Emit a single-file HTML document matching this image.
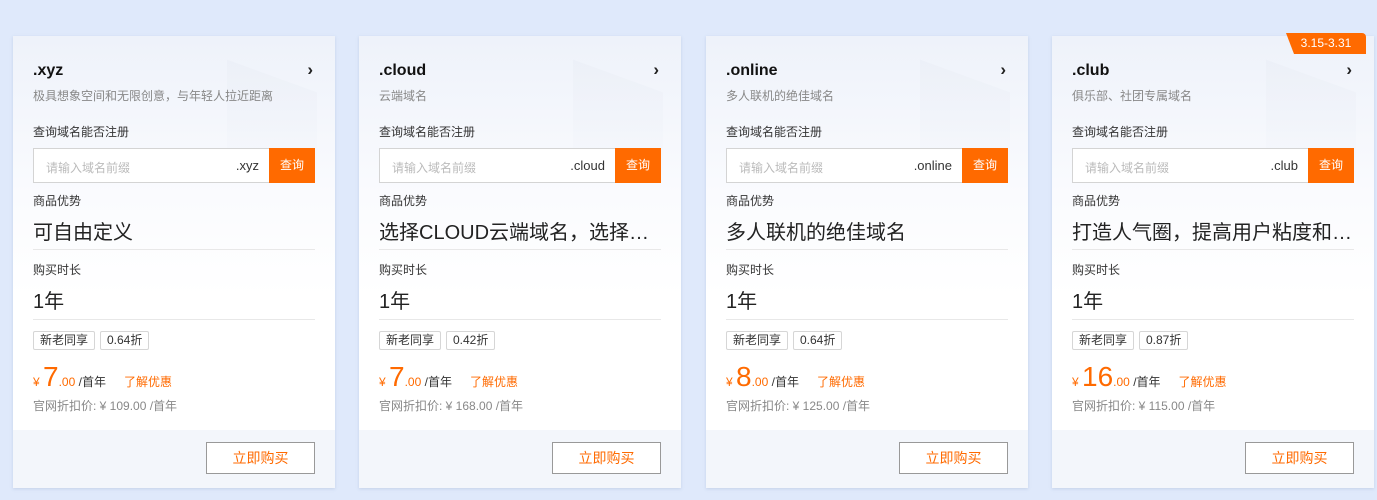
<!DOCTYPE html>
<html><head><meta charset="utf-8"><style>
*{margin:0;padding:0;box-sizing:border-box}
body{width:1377px;height:500px;background:#dfe9fb;font-family:"Liberation Sans","Noto Sans CJK SC",sans-serif;position:relative;overflow:hidden;color:#222}
.card{position:absolute;top:36px;width:322px;height:452px;background:linear-gradient(180deg,#eef2fa 0,#fafbfe 160px,#fff 260px);box-shadow:0 1px 3px rgba(120,140,180,.25)}
.deco{position:absolute;right:18px;top:40px;width:90px;height:90px;background:linear-gradient(160deg,rgba(232,236,244,.45),rgba(245,247,252,.1));transform:skewY(20deg)}
.t{position:absolute;left:20px;top:26px;font-size:16px;font-weight:bold;color:#111}
.arr{position:absolute;right:22px;top:24px;font-size:17px;font-weight:bold;color:#222}
.sub{position:absolute;left:20px;top:51px;font-size:12px;color:#888}
.lbl{position:absolute;left:20px;font-size:12px;color:#333}
.inp{position:absolute;left:20px;top:112px;width:282px;height:35px;border:1px solid #d4d4d4;background:#fff}
.inp .ph{position:absolute;left:12px;top:10px;font-size:12px;color:#bbb}
.inp .sf{position:absolute;right:55px;top:9px;font-size:13px;color:#333}
.inp .b{position:absolute;right:-1px;top:-1px;width:46px;height:35px;background:#ff6a00;color:#fff;font-size:12px;text-align:center;line-height:35px}
.big{position:absolute;left:20px;font-size:20px;color:#222;white-space:nowrap}
.ln{position:absolute;left:20px;width:282px;height:1px;background:#e8e8e8}
.tag{position:absolute;top:295px;height:19px;border:1px solid #d6d6d6;border-radius:2px;font-size:12px;line-height:17px;padding:0 6px;background:#fff;color:#333}
.pr{position:absolute;left:20px;top:325px;color:#ff6a00;white-space:nowrap}
.pr .y{font-size:12px}.pr .n{font-size:28px}.pr .d{font-size:12px}.pr .u{font-size:12px;color:#333}.pr .l{font-size:12px;margin-left:18px}
.og{position:absolute;left:20px;top:361px;font-size:12px;color:#888}
.ft{position:absolute;left:0;bottom:0;width:100%;height:58px;background:#f3f6fb}
.buy{position:absolute;right:20px;bottom:14px;width:109px;height:32px;border:1px solid #999;background:#fff;color:#ff6a00;font-size:14px;text-align:center;line-height:30px}
.badge{position:absolute;right:8px;top:-3px;height:21px;width:80px;background:#ff6a00;color:#fff;font-size:12px;line-height:21px;text-align:center;border-radius:0 4px 0 0;clip-path:polygon(0 0,100% 0,100% 100%,10% 100%)}
</style></head><body>

<div class="card" style="left:13px">
<div class="deco"></div>
<div class="t">.xyz</div><div class="arr">›</div>
<div class="sub">极具想象空间和无限创意，与年轻人拉近距离</div>
<div class="lbl" style="top:87px">查询域名能否注册</div>
<div class="inp"><span class="ph">请输入域名前缀</span><span class="sf">.xyz</span><span class="b">查询</span></div>
<div class="lbl" style="top:156px">商品优势</div>
<div class="big" style="top:180px">可自由定义</div>
<div class="ln" style="top:213px"></div>
<div class="lbl" style="top:225px">购买时长</div>
<div class="big" style="top:249px">1年</div>
<div class="ln" style="top:283px"></div>
<div class="tag" style="left:20px">新老同享</div><div class="tag" style="left:87px">0.64折</div>
<div class="pr"><span class="y">¥ </span><span class="n">7</span><span class="d">.00 </span><span class="u">/首年</span><span class="l">了解优惠</span></div>
<div class="og">官网折扣价: ¥ 109.00 /首年</div>
<div class="ft"></div><div class="buy">立即购买</div>
</div>

<div class="card" style="left:359px">
<div class="deco"></div>
<div class="t">.cloud</div><div class="arr">›</div>
<div class="sub">云端域名</div>
<div class="lbl" style="top:87px">查询域名能否注册</div>
<div class="inp"><span class="ph">请输入域名前缀</span><span class="sf">.cloud</span><span class="b">查询</span></div>
<div class="lbl" style="top:156px">商品优势</div>
<div class="big" style="top:180px">选择CLOUD云端域名，选择…</div>
<div class="ln" style="top:213px"></div>
<div class="lbl" style="top:225px">购买时长</div>
<div class="big" style="top:249px">1年</div>
<div class="ln" style="top:283px"></div>
<div class="tag" style="left:20px">新老同享</div><div class="tag" style="left:87px">0.42折</div>
<div class="pr"><span class="y">¥ </span><span class="n">7</span><span class="d">.00 </span><span class="u">/首年</span><span class="l">了解优惠</span></div>
<div class="og">官网折扣价: ¥ 168.00 /首年</div>
<div class="ft"></div><div class="buy">立即购买</div>
</div>

<div class="card" style="left:706px">
<div class="deco"></div>
<div class="t">.online</div><div class="arr">›</div>
<div class="sub">多人联机的绝佳域名</div>
<div class="lbl" style="top:87px">查询域名能否注册</div>
<div class="inp"><span class="ph">请输入域名前缀</span><span class="sf">.online</span><span class="b">查询</span></div>
<div class="lbl" style="top:156px">商品优势</div>
<div class="big" style="top:180px">多人联机的绝佳域名</div>
<div class="ln" style="top:213px"></div>
<div class="lbl" style="top:225px">购买时长</div>
<div class="big" style="top:249px">1年</div>
<div class="ln" style="top:283px"></div>
<div class="tag" style="left:20px">新老同享</div><div class="tag" style="left:87px">0.64折</div>
<div class="pr"><span class="y">¥ </span><span class="n">8</span><span class="d">.00 </span><span class="u">/首年</span><span class="l">了解优惠</span></div>
<div class="og">官网折扣价: ¥ 125.00 /首年</div>
<div class="ft"></div><div class="buy">立即购买</div>
</div>

<div class="card" style="left:1052px">
<div class="deco"></div>
<div class="badge">3.15-3.31</div>
<div class="t">.club</div><div class="arr">›</div>
<div class="sub">俱乐部、社团专属域名</div>
<div class="lbl" style="top:87px">查询域名能否注册</div>
<div class="inp"><span class="ph">请输入域名前缀</span><span class="sf">.club</span><span class="b">查询</span></div>
<div class="lbl" style="top:156px">商品优势</div>
<div class="big" style="top:180px">打造人气圈，提高用户粘度和…</div>
<div class="ln" style="top:213px"></div>
<div class="lbl" style="top:225px">购买时长</div>
<div class="big" style="top:249px">1年</div>
<div class="ln" style="top:283px"></div>
<div class="tag" style="left:20px">新老同享</div><div class="tag" style="left:87px">0.87折</div>
<div class="pr"><span class="y">¥ </span><span class="n">16</span><span class="d">.00 </span><span class="u">/首年</span><span class="l">了解优惠</span></div>
<div class="og">官网折扣价: ¥ 115.00 /首年</div>
<div class="ft"></div><div class="buy">立即购买</div>
</div>

</body></html>
